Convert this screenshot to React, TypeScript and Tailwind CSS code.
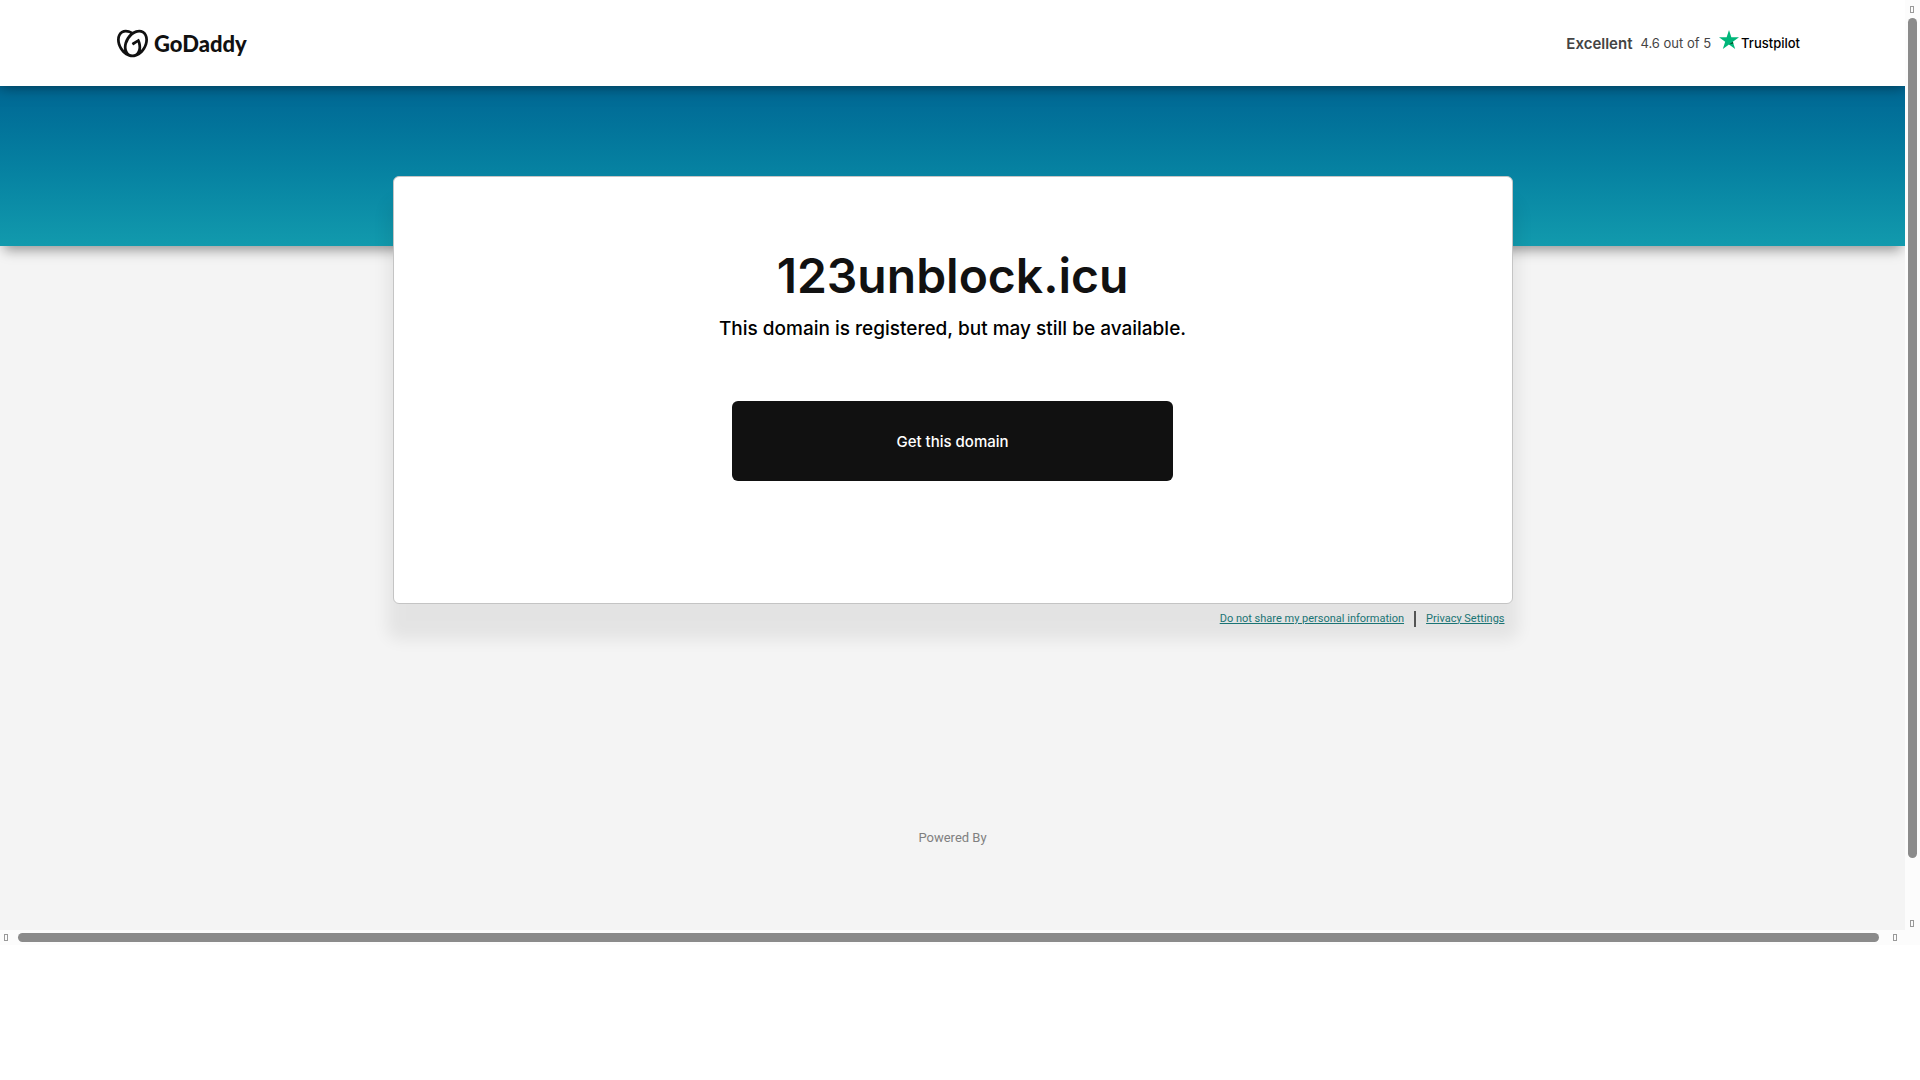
import { SiGodaddy } from "react-icons/si";

function GoDaddyLogo() {
  return (
    <a href="#home" aria-label="GoDaddy" className="flex items-center gap-1.5 text-[#111111]">
      <SiGodaddy className="size-[31px]" aria-hidden="true" />
      <span className="pt-0.5 font-[Lato,sans-serif] text-[22px] leading-8 font-black">GoDaddy</span>
    </a>
  );
}

function Rating() {
  return (
    <div className="flex items-center gap-2 text-[#444444]">
      <span className="pt-0.5 text-[15px] font-semibold">Excellent</span>
      <span className="pt-0.5 text-[13px]">4.6 out of 5</span>
      <a href="#trustpilot" className="flex items-end gap-0.5 pb-2 text-black">
        <svg viewBox="0 0 20 19" className="h-[19px] w-5" aria-hidden="true">
          <path d="M10 0l2.360 7.260H20l-6.180 4.480L16.180 19 10 14.510 3.820 19l2.360-7.260L0 7.260h7.640z" fill="#00b67a" />
          <path d="M14.350 13.400l-.53-1.660L10 14.510z" fill="#005128" />
        </svg>
        <span className="text-[13px] leading-3 font-medium">Trustpilot</span>
      </a>
    </div>
  );
}

function ArrowBox() {
  return <span aria-hidden="true" className="h-[7px] w-1 shrink-0 border border-[#999999]" />;
}

export default function App() {
  return (
    <div className="bg-white font-[Inter,sans-serif]">
      <div className="grid grid-cols-[1fr_15px] bg-[#fcfcfc]">
        <div className="min-h-[930px] overflow-hidden bg-[#f4f4f4]">
          <header className="relative flex h-[86px] items-center justify-between bg-white px-[105px] shadow-[0_0_14px_rgba(0,0,0,0.5)]">
            <div className="pl-3">
              <GoDaddyLogo />
            </div>
            <Rating />
          </header>
          <div className="h-40 bg-linear-to-b from-[#006794] to-[#129aad] shadow-[0_8px_12px_-4px_rgba(0,0,0,0.4)]" />
          <main className="relative mx-auto -mt-[70px] w-full max-w-[1120px]">
            <section className="flex min-h-[428px] flex-col items-center rounded-md border border-[#c4c4c4] bg-white pt-[67px] shadow-[0_30px_16px_6px_rgba(0,0,0,0.065)]">
              <h1 className="text-[48px] leading-[64px] font-semibold text-[#111111]">123unblock.icu</h1>
              <p className="mt-[3px] text-[19px] leading-9 font-medium text-black">This domain is registered, but may still be available.</p>
              <button type="button" className="mt-[54px] h-20 w-full max-w-[441px] rounded-md bg-[#111111] pt-0.5 text-[15px] font-medium text-white">
                Get this domain
              </button>
            </section>
            <nav aria-label="Privacy" className="flex h-7 items-center justify-end gap-2.5 pt-0.5 pr-2 font-[Roboto,sans-serif] text-[11px] text-[#1a7474]">
              <a href="#do-not-share" className="underline">Do not share my personal information</a>
              <span className="h-4 border-l-2 border-[#555555]" />
              <a href="#privacy" className="underline">Privacy Settings</a>
            </nav>
          </main>
          <footer className="mt-[196px] text-center font-[Roboto,sans-serif] text-[13px] leading-5 text-[#808080]">Powered By</footer>
        </div>
        <div className="flex flex-col items-center gap-[5px] pt-1.5 pb-[3px]">
          <div className="flex w-[5px]">
            <ArrowBox />
          </div>
          <div className="w-[9px] grow-[840] rounded-full bg-[#8b8b8b]" />
          <div className="grow-[52]" />
          <div className="flex w-[5px]">
            <ArrowBox />
          </div>
        </div>
        <div className="flex h-[15px] items-center gap-2.5 pr-2 pl-1">
          <ArrowBox />
          <div className="h-[9px] grow rounded-full bg-[#8b8b8b]" />
          <div className="flex w-2 justify-end">
            <ArrowBox />
          </div>
        </div>
      </div>
    </div>
  );
}
